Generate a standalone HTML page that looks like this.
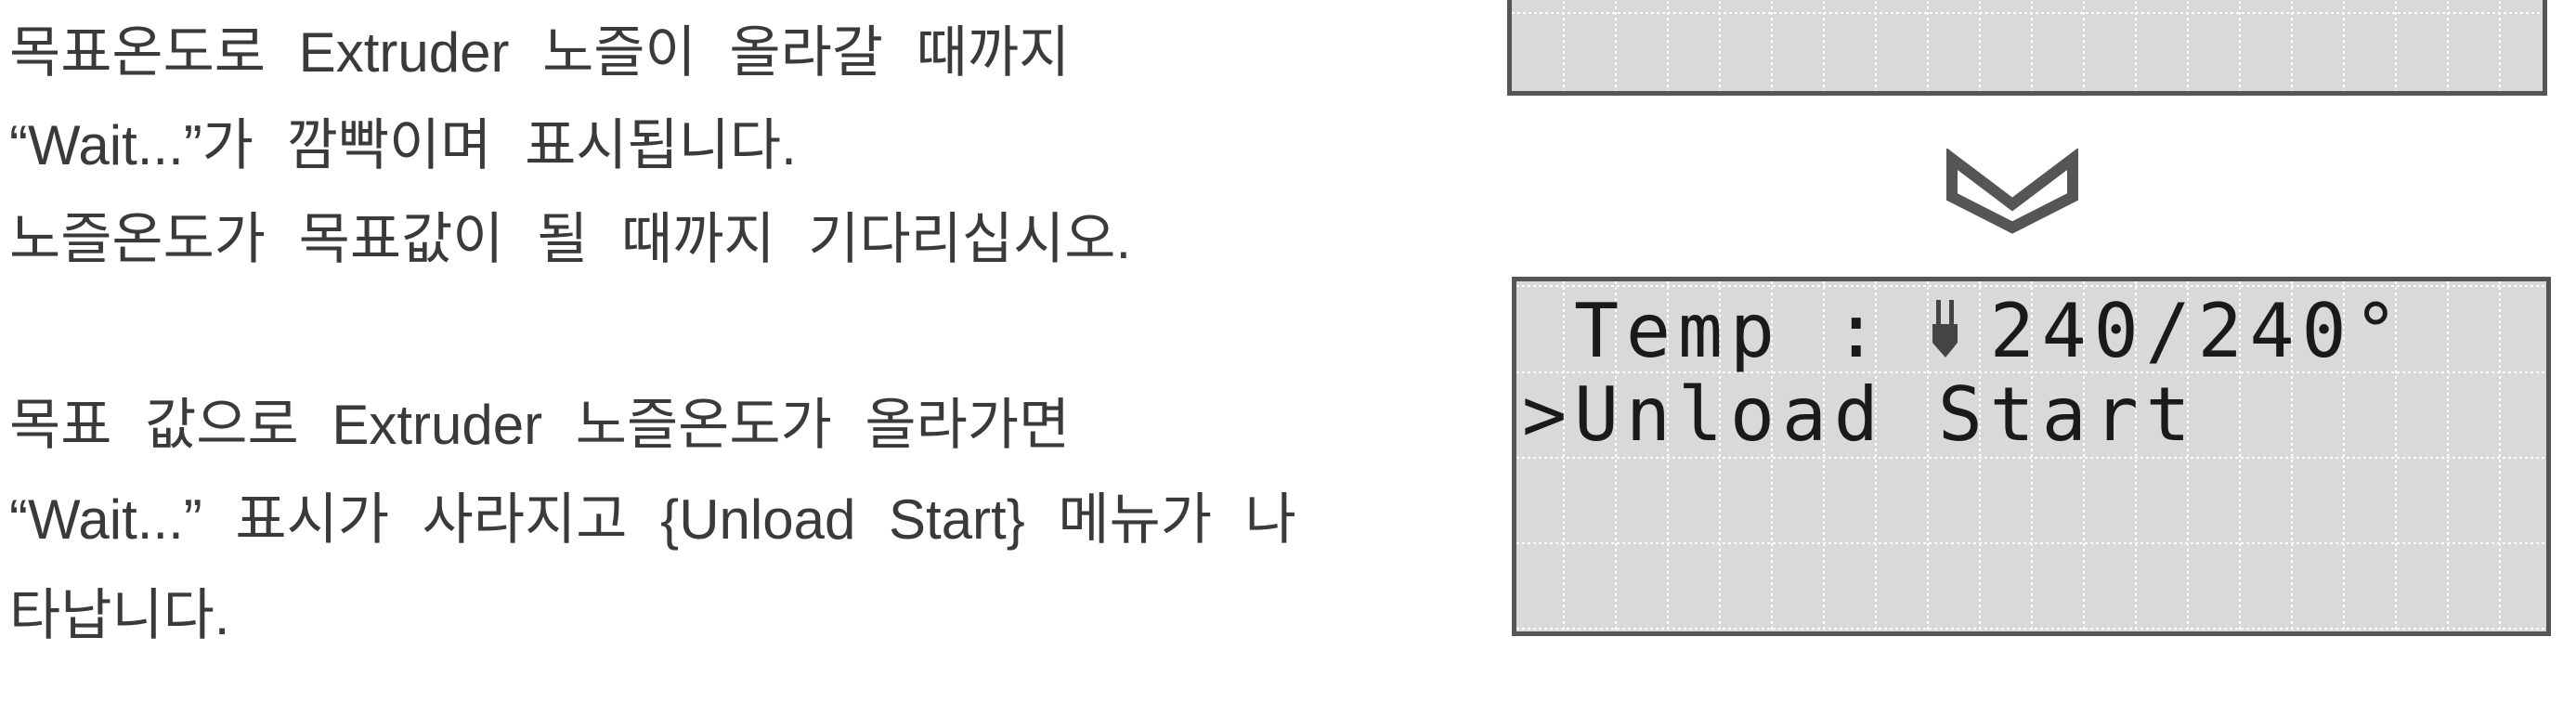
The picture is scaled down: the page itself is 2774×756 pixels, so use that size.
<!DOCTYPE html>
<html><head><meta charset="utf-8"><style>
html,body{margin:0;padding:0;background:#fff;}
body{width:2774px;height:756px;position:relative;overflow:hidden;}
.t{position:absolute;left:10px;font-family:"Liberation Sans","Noto Sans CJK KR",sans-serif;font-size:60px;color:#3a3a3a;white-space:nowrap;word-spacing:19px;line-height:60px;}
.lcd{position:absolute;background:#d9d9d9;border:5px solid #555;box-sizing:border-box;}
.m{position:absolute;font-family:"DejaVu Sans Mono","Liberation Mono",monospace;font-size:80px;color:#1a1a1a;white-space:pre;letter-spacing:7.8px;line-height:80px;}
</style></head><body>
<div class="t" style="top:27px">목표온도로 Extruder 노즐이 올라갈 때까지</div>
<div class="t" style="top:127px">“Wait...”가 깜빡이며 표시됩니다.</div>
<div class="t" style="top:228px">노즐온도가 목표값이 될 때까지 기다리십시오.</div>
<div class="t" style="top:428px">목표 값으로 Extruder 노즐온도가 올라가면</div>
<div class="t" style="top:530px">“Wait...” 표시가 사라지고 {Unload Start} 메뉴가 나</div>
<div class="t" style="top:633px">타납니다.</div>

<div class="lcd" style="left:1623px;top:-10px;width:1120px;height:113px;">
<svg width="1110" height="103" style="position:absolute;left:0;top:0">
<g stroke="#fff" stroke-width="2" stroke-dasharray="3 3" fill="none">
<line x1="0" y1="19" x2="1110" y2="19"/>
<line x1="56" y1="0" x2="56" y2="103"/><line x1="112" y1="0" x2="112" y2="103"/><line x1="168" y1="0" x2="168" y2="103"/><line x1="224" y1="0" x2="224" y2="103"/><line x1="280" y1="0" x2="280" y2="103"/><line x1="336" y1="0" x2="336" y2="103"/><line x1="392" y1="0" x2="392" y2="103"/><line x1="448" y1="0" x2="448" y2="103"/><line x1="504" y1="0" x2="504" y2="103"/><line x1="560" y1="0" x2="560" y2="103"/><line x1="616" y1="0" x2="616" y2="103"/><line x1="672" y1="0" x2="672" y2="103"/><line x1="728" y1="0" x2="728" y2="103"/><line x1="784" y1="0" x2="784" y2="103"/><line x1="840" y1="0" x2="840" y2="103"/><line x1="896" y1="0" x2="896" y2="103"/><line x1="952" y1="0" x2="952" y2="103"/><line x1="1008" y1="0" x2="1008" y2="103"/><line x1="1064" y1="0" x2="1064" y2="103"/>
</g></svg>
</div>

<svg style="position:absolute;left:2090px;top:160px" width="155" height="95">
<polygon points="12,11 77,60 142,11 142,52 77,85 12,52" fill="#fff" stroke="#555" stroke-width="12" stroke-linejoin="miter"/>
</svg>

<div class="lcd" style="left:1628px;top:298px;width:1119px;height:387px;">
<svg width="1109" height="377" style="position:absolute;left:0;top:0">
<g stroke="#fff" stroke-width="2" stroke-dasharray="3 3" fill="none">
<line x1="0" y1="5" x2="1109" y2="5"/><line x1="0" y1="98" x2="1109" y2="98"/><line x1="0" y1="190" x2="1109" y2="190"/><line x1="0" y1="282" x2="1109" y2="282"/><line x1="0" y1="374" x2="1109" y2="374"/>
<line x1="51" y1="0" x2="51" y2="377"/><line x1="107" y1="0" x2="107" y2="377"/><line x1="163" y1="0" x2="163" y2="377"/><line x1="219" y1="0" x2="219" y2="377"/><line x1="275" y1="0" x2="275" y2="377"/><line x1="331" y1="0" x2="331" y2="377"/><line x1="387" y1="0" x2="387" y2="377"/><line x1="443" y1="0" x2="443" y2="377"/><line x1="499" y1="0" x2="499" y2="377"/><line x1="555" y1="0" x2="555" y2="377"/><line x1="611" y1="0" x2="611" y2="377"/><line x1="667" y1="0" x2="667" y2="377"/><line x1="723" y1="0" x2="723" y2="377"/><line x1="779" y1="0" x2="779" y2="377"/><line x1="835" y1="0" x2="835" y2="377"/><line x1="891" y1="0" x2="891" y2="377"/><line x1="947" y1="0" x2="947" y2="377"/><line x1="1003" y1="0" x2="1003" y2="377"/><line x1="1059" y1="0" x2="1059" y2="377"/>
</g>
<g fill="#444">
<rect x="452" y="20" width="5" height="30"/>
<rect x="466" y="20" width="5" height="30"/>
<path d="M448 46 L475 46 L475 66 L462 82 L448 66 Z"/>
</g>
</svg>
<div class="m" style="left:6px;top:14px;"> Temp :  240/240°</div>
<div class="m" style="left:6px;top:104px;">&gt;Unload Start</div>
</div>
</body></html>
